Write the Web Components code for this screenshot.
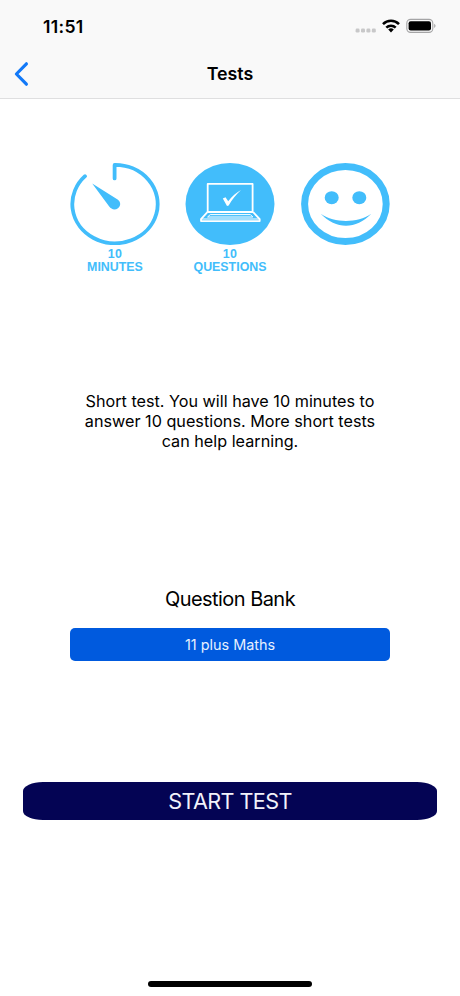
<!DOCTYPE html>
<html lang="en">
<head>
<meta charset="utf-8">
<meta name="viewport" content="width=device-width, initial-scale=1">
<title>Tests</title>
<style>
    html, body {
        margin: 0;
        height: 100%;
    }

    body {
        background: #fff;
        color: #000;
        font-family: Inter, "Liberation Sans", sans-serif;
        overflow: hidden;
    }
</style>
</head>
<body>
<test-screen>
    <status-bar slot="header" time="11:51"></status-bar>
    <nav-bar slot="header" label="Tests"></nav-bar>
    <test-badge icon="clock" count="10" label="MINUTES" slot="badges"></test-badge>
    <test-badge icon="laptop" count="10" label="QUESTIONS" slot="badges"></test-badge>
    <test-badge icon="smile" slot="badges"></test-badge>
    <span slot="description">Short test. You will have 10 minutes to<br>answer 10 questions. More short tests<br>can help learning.</span>
    <question-bank slot="bank" label="Question Bank">11 plus Maths</question-bank>
    <start-button slot="action">START TEST</start-button>
</test-screen>

<script>
class StatusBar extends HTMLElement {
    connectedCallback() {
        const time = this.getAttribute('time') || '';

        this.attachShadow({ mode: 'open' });
        this.shadowRoot.innerHTML = `
            <style>
                :host {
                    display: flex;
                    align-items: center;
                    justify-content: space-between;
                    box-sizing: border-box;
                    height: 50px;
                    padding: 2px 24px 0 43px;
                }

                .time {
                    font-size: 17.6px;
                    font-weight: 600;
                    letter-spacing: 0.3px;
                }

                svg {
                    display: block;
                    width: 82px;
                    height: 18px;
                }
            </style>
            <span class="time">${time}</span>
            <svg viewBox="354 16.4 82 18">
                <g fill="#c8c8c9">
                    <rect x="355.6" y="28" width="4" height="4" rx="1.3"/>
                    <rect x="361" y="28" width="4" height="4" rx="1.3"/>
                    <rect x="366.4" y="28" width="4" height="4" rx="1.3"/>
                    <rect x="371.8" y="28" width="4" height="4" rx="1.3"/>
                </g>
                <g fill="none" stroke="#000" stroke-width="2.6">
                    <path d="M383 23.5a11.4 11.4 0 0 1 16 0"/>
                    <path d="M386.3 27a6.8 6.8 0 0 1 9.4 0"/>
                </g>
                <path d="M388.2 28.9a4 4 0 0 1 5.6 0L391 31.8z"/>
                <rect x="406.8" y="18.8" width="26" height="13" rx="3.8" fill="none" stroke="#a5a5a6" stroke-width="1.1"/>
                <rect x="408.6" y="20.6" width="22.4" height="9.4" rx="2.1"/>
                <path d="M434.2 23.2c1.8.8 1.8 3.4 0 4.2z" fill="#a5a5a6"/>
            </svg>
        `;
    }
}

class NavBar extends HTMLElement {
    connectedCallback() {
        const label = this.getAttribute('label') || '';

        this.attachShadow({ mode: 'open' });
        this.shadowRoot.innerHTML = `
            <style>
                :host {
                    display: grid;
                    grid-template-columns: 60px 1fr 60px;
                    align-items: center;
                    height: 48px;
                }

                button {
                    display: flex;
                    padding: 0 0 0 13px;
                    border: 0;
                    background: none;
                }

                h1 {
                    margin: 0;
                    font-size: 17.8px;
                    font-weight: 600;
                    line-height: 24px;
                    text-align: center;
                }
            </style>
            <button aria-label="Back">
                <svg width="16" height="26" viewBox="0 0 16 26">
                    <path d="M13.4 2.8L3.4 13l10 10.2" fill="none" stroke="#1279f8" stroke-width="3.2" stroke-linecap="round" stroke-linejoin="round"/>
                </svg>
            </button>
            <h1>${label}</h1>
        `;
    }
}

const badgeIcons = {
    clock: `
        <path d="M54.6 23.4V9.9A42.7 39.2 0 1 1 25 21.2" fill="none" stroke="currentColor" stroke-width="3.8" stroke-linecap="round" stroke-linejoin="round"/>
        <path d="M32.2 28.6L57.6 44.6C61 47 61 51 58 53.2C55 55.3 51.4 54.6 49.2 51.6z" fill="currentColor"/>
    `,
    laptop: `
        <ellipse cx="55" cy="49" rx="44.5" ry="41" fill="currentColor"/>
        <g fill="none" stroke="#fff" stroke-width="1.8" stroke-linejoin="round">
            <path d="M32.7 57V28.9H77.6V57z"/>
            <path d="M32.4 57.2L26 64.2V66.1H84.7V64.2L78.2 57.2"/>
            <path d="M26 64H84.7" stroke-width="1.2"/>
            <path d="M35.2 59.6H75.4L77.8 62H32.6z" stroke-width="1"/>
        </g>
        <path d="M47.8 43.6L50.5 42.3L53.2 46.2C57 41.4 61.2 37.6 66 35C61.3 39.3 56.8 44.6 53.7 50.6L52 51z" fill="#fff"/>
    `,
    smile: `
        <ellipse cx="55.4" cy="49" rx="40.8" ry="37.5" fill="none" stroke="currentColor" stroke-width="7"/>
        <ellipse cx="41.7" cy="42.7" rx="7" ry="6.5" fill="currentColor"/>
        <ellipse cx="69.3" cy="42.7" rx="7" ry="6.5" fill="currentColor"/>
        <path d="M30.7 58.8C45 68.4 67 68.4 81.3 58.8C66 74.8 46 74.8 30.7 58.8z" fill="currentColor"/>
    `
};

class TestBadge extends HTMLElement {
    connectedCallback() {
        const icon = this.getAttribute('icon');
        const count = this.getAttribute('count') || '';
        const label = this.getAttribute('label') || '';

        this.attachShadow({ mode: 'open' });
        this.shadowRoot.innerHTML = `
            <style>
                :host {
                    display: flex;
                    flex-direction: column;
                    align-items: center;
                    width: 90px;
                    color: #42bdfb;
                    font: bold 12.4px/13px "Liberation Sans", Arial, sans-serif;
                }

                svg {
                    display: block;
                    flex: none;
                    width: 90px;
                    height: 82px;
                    margin-bottom: 3px;
                }

                .count {
                    letter-spacing: 0.4px;
                }
            </style>
            <svg viewBox="10 8 90 82">${badgeIcons[icon] || ''}</svg>
            <span class="count">${count}</span>
            <span>${label}</span>
        `;
    }
}

class QuestionBank extends HTMLElement {
    connectedCallback() {
        const label = this.getAttribute('label') || '';

        this.attachShadow({ mode: 'open' });
        this.shadowRoot.innerHTML = `
            <style>
                :host {
                    display: flex;
                    flex-direction: column;
                    gap: 16px;
                    text-align: center;
                }

                h2 {
                    margin: 0;
                    font-size: 20px;
                    font-weight: 400;
                    line-height: 26px;
                    letter-spacing: -0.55px;
                }

                button {
                    height: 33px;
                    padding: 0;
                    border: 0;
                    border-radius: 5px;
                    background: #005ade;
                    color: #e6f0ff;
                    font: 14.4px/33px Inter, "Liberation Sans", sans-serif;
                }
            </style>
            <h2>${label}</h2>
            <button><slot></slot></button>
        `;
    }
}

class StartButton extends HTMLElement {
    connectedCallback() {
        this.attachShadow({ mode: 'open' });
        this.shadowRoot.innerHTML = `
            <style>
                :host {
                    display: flex;
                }

                button {
                    flex: 1;
                    height: 38px;
                    padding: 0;
                    border: 0;
                    border-radius: 20px / 9px;
                    background: #040454;
                    color: #f2f2fa;
                    font: 21.6px/38px Inter, "Liberation Sans", sans-serif;
                    letter-spacing: -0.6px;
                }
            </style>
            <button><slot></slot></button>
        `;
    }
}

class TestScreen extends HTMLElement {
    connectedCallback() {
        this.attachShadow({ mode: 'open' });
        this.shadowRoot.innerHTML = `
            <style>
                :host {
                    display: flex;
                    flex-direction: column;
                    height: 996px;
                }

                header {
                    border-bottom: 1px solid #dfdfe0;
                    background: #f9f9f9;
                }

                main {
                    flex: 1;
                    padding: 64px 23px 0;
                }

                .badges {
                    display: flex;
                    justify-content: space-between;
                    height: 112px;
                    margin: 0 47px;
                }

                p {
                    margin: 116px 0 0;
                    font-size: 16.2px;
                    line-height: 20px;
                    text-align: center;
                }

                .bank {
                    margin: 135px 47px 121px;
                }

                footer {
                    display: flex;
                    justify-content: center;
                    padding-bottom: 9px;
                }

                .home {
                    width: 164px;
                    height: 6px;
                    border-radius: 3px;
                    background: #000;
                }
            </style>
            <header><slot name="header"></slot></header>
            <main>
                <div class="badges"><slot name="badges"></slot></div>
                <p><slot name="description"></slot></p>
                <div class="bank"><slot name="bank"></slot></div>
                <slot name="action"></slot>
            </main>
            <footer><div class="home"></div></footer>
        `;
    }
}

customElements.define('status-bar', StatusBar);
customElements.define('nav-bar', NavBar);
customElements.define('test-badge', TestBadge);
customElements.define('question-bank', QuestionBank);
customElements.define('start-button', StartButton);
customElements.define('test-screen', TestScreen);
</script>
</body>
</html>
